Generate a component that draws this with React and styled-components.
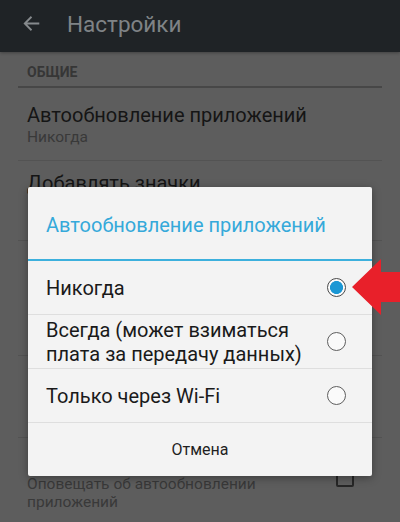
import React from "react";
import styled, { createGlobalStyle } from "styled-components";

const GlobalStyle = createGlobalStyle`
  html, body {
    margin: 0;
    padding: 0;
    width: 400px;
    height: 522px;
    overflow: hidden;
    background: #5d5d5d;
    font-family: Roboto, "Noto Sans", "Liberation Sans", sans-serif;
  }
`;

const Screen = styled.div`
  position: relative;
  width: 400px;
  height: 522px;
  overflow: hidden;
  background: #5d5d5d;
`;

const TopBar = styled.header`
  height: 52px;
  box-sizing: border-box;
  padding: 12px 0 0 23px;
  display: flex;
  align-items: flex-start;
  background: #1f2326;
  box-shadow: 0 1px 3px rgba(0, 0, 0, 0.3);
`;

const BackButton = styled.svg`
  width: 17px;
  height: 17px;
  margin-top: 3px;
  margin-right: 27px;
  flex-shrink: 0;
`;

const BarTitle = styled.h1`
  margin: 0;
  font-size: 22.5px;
  line-height: 24px;
  font-weight: 400;
  color: #7f8386;
`;

const List = styled.div`
  padding: 0 18px;
`;

const SectionHeader = styled.div`
  height: 36px;
  box-sizing: border-box;
  padding: 12px 0 0 9px;
  border-bottom: 2px solid #474747;
  font-size: 14px;
  line-height: 16px;
  font-weight: 700;
  color: #363636;
`;

const PrefRow = styled.div`
  height: ${({ h }) => h}px;
  box-sizing: border-box;
  padding: ${({ top }) => top}px 60px 0 9px;
  position: relative;
  border-bottom: ${({ last }) => (last ? "none" : "1px solid #535353")};
`;

const PrefTitle = styled.div`
  font-size: 20px;
  line-height: 24px;
  color: #151515;
`;

const PrefSummary = styled.div`
  margin-top: ${({ gap = 1 }) => gap}px;
  font-size: 15.5px;
  line-height: 18px;
  color: #393939;
`;

const CheckBox = styled.span`
  position: absolute;
  right: 28px;
  top: 31px;
  width: 18px;
  height: 18px;
  box-sizing: border-box;
  border: 2px solid #262626;
  border-radius: 2px;
`;

const Dialog = styled.div`
  position: absolute;
  left: 28px;
  top: 187px;
  width: 344px;
  background: #f3f3f3;
  border-radius: 2px;
  box-shadow: 0 2px 8px rgba(0, 0, 0, 0.35);
`;

const DialogTitle = styled.div`
  height: 74px;
  box-sizing: border-box;
  padding: 26px 18px 0;
  border-bottom: 2px solid #3cb0dd;
  font-size: 20px;
  line-height: 24px;
  color: #35a9da;
`;

const Option = styled.div`
  height: 54px;
  box-sizing: border-box;
  display: flex;
  align-items: center;
  padding: 0 26px 0 18px;
  border-bottom: 1px solid #dedede;
`;

const OptionLabel = styled.span`
  flex: 1;
  padding-right: 12px;
  font-size: 20px;
  line-height: 24px;
  color: #1a1a1a;
`;

const Radio = styled.span`
  width: 19px;
  height: 19px;
  box-sizing: border-box;
  flex-shrink: 0;
  border-radius: 50%;
  border: 1.5px solid ${({ checked }) => (checked ? "#4a4a4a" : "#5e5e5e")};
  background: ${({ checked }) =>
    checked ? "radial-gradient(circle, #1b97d4 0 6.2px, #fbfbfb 6.8px)" : "#fafafa"};
`;

const CancelButton = styled.div`
  height: 53px;
  display: flex;
  align-items: center;
  justify-content: center;
  font-size: 16px;
  color: #1f1f1f;
`;

const Pointer = styled.svg`
  position: absolute;
  left: 352px;
  top: 258px;
  width: 48px;
  height: 58px;
`;

const options = [
  { label: "Никогда", checked: true },
  { label: "Всегда (может взиматься плата за передачу данных)" },
  { label: "Только через Wi-Fi" },
];

export default function App() {
  return (
    <Screen>
      <GlobalStyle />
      <TopBar>
        <BackButton viewBox="0 0 24 24">
          <path
            d="M23 12H2.5M12 2.5 2.5 12l9.5 9.5"
            fill="none"
            stroke="#868a8d"
            strokeWidth="2.6"
          />
        </BackButton>
        <BarTitle>Настройки</BarTitle>
      </TopBar>

      {/* rows under the dialog keep only their dividers */}
      <List>
        <SectionHeader>ОБЩИЕ</SectionHeader>
        <PrefRow h={73} top={15}>
          <PrefTitle>Автообновление приложений</PrefTitle>
          <PrefSummary>Никогда</PrefSummary>
        </PrefRow>
        <PrefRow h={80} top={10}>
          <PrefTitle>Добавлять значки</PrefTitle>
        </PrefRow>
        <PrefRow h={115} top={14} />
        <PrefRow h={82} top={14} />
        <PrefRow h={90} top={12} last>
          <PrefSummary gap={25}>
            Оповещать об автообновлении
            <br />
            приложений
          </PrefSummary>
          <CheckBox />
        </PrefRow>
      </List>

      <Dialog>
        <DialogTitle>Автообновление приложений</DialogTitle>
        {options.map((o) => (
          <Option key={o.label}>
            <OptionLabel>{o.label}</OptionLabel>
            <Radio checked={o.checked} />
          </Option>
        ))}
        <CancelButton>Отмена</CancelButton>
      </Dialog>

      <Pointer viewBox="0 0 48 58">
        <polygon
          points="0,29 29,1 29,14 48,14 48,44 29,44 29,57"
          fill="#e8202a"
        />
      </Pointer>
    </Screen>
  );
}
